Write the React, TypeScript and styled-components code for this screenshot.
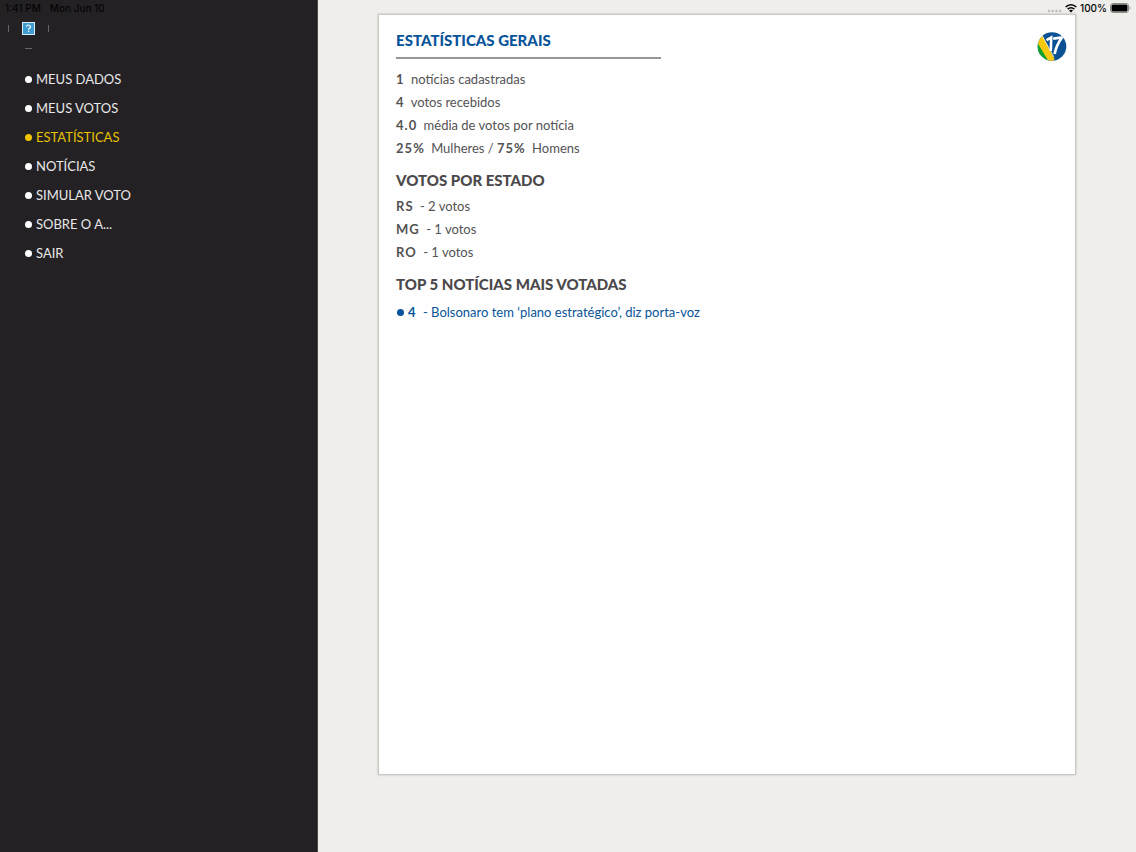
import React from "react";
import styled, { createGlobalStyle } from "styled-components";

const GlobalStyle = createGlobalStyle`
  *, *::before, *::after { box-sizing: border-box; }
  body {
    margin: 0;
    background: #efeeea;
    font-family: Lato, "Liberation Sans", sans-serif;
    font-size: 13px;
    color: #545354;
  }
`;

const Page = styled.div`
  position: relative;
  display: flex;
  min-height: 100vh;
`;

const StatusBar = styled.header`
  position: absolute;
  top: 0;
  left: 0;
  right: 0;
  display: flex;
  justify-content: space-between;
  padding: 0 5px;
  font-family: Inter, "Liberation Sans", sans-serif;
  font-size: 10px;
  font-weight: 500;
  line-height: 16px;
  color: #050505;
`;

const StatusGroup = styled.div<{ $gap: number }>`
  display: flex;
  align-items: center;
  gap: ${({ $gap }) => $gap}px;
`;

const Sidebar = styled.aside`
  flex: 0 0 28%;
  padding: 8px 8px 0;
  background: #242124;
  border-right: 1px solid #4b494b;
`;

const Avatar = styled.svg`
  display: block;
`;

const Menu = styled.ul`
  list-style: none;
  margin: 16px 0 0;
  padding: 0 0 0 17px;
`;

const MenuLink = styled.a<{ $active: boolean }>`
  display: flex;
  align-items: center;
  gap: 4px;
  line-height: 29px;
  text-decoration: none;
  color: ${({ $active }) => ($active ? "#e6c200" : "#e8e8e8")};

  &::before {
    content: "";
    width: 7px;
    height: 7px;
    border-radius: 50%;
    background: ${({ $active }) => ($active ? "#f0c400" : "#ffffff")};
  }
`;

const Main = styled.main`
  flex: 1;
  display: flex;
  padding: 14px 60px 77px;
`;

const Card = styled.article`
  flex: 1;
  display: flex;
  justify-content: space-between;
  align-items: flex-start;
  padding: 17px 8px 16px 17px;
  background: #fefefe;
  border: 1px solid #c9c8c4;
  box-shadow: 0 0 2px #bdbcb8;
`;

const Title = styled.h1`
  width: 265px;
  margin: 0 0 9px;
  padding-bottom: 9px;
  border-bottom: 2px solid #969696;
  font-size: 15px;
  font-weight: 900;
  line-height: 16px;
  color: #07549a;
`;

const Subtitle = styled.h2`
  margin: 9px 0 3px;
  font-size: 15px;
  font-weight: 900;
  line-height: 23px;
  color: #4b494b;
`;

const Lines = styled.ul`
  list-style: none;
  margin: 0;
  padding: 0;
  line-height: 23px;
`;

const Value = styled.b`
  margin-right: 3px;
  letter-spacing: 1px;
`;

const NewsLink = styled.a`
  display: flex;
  align-items: center;
  white-space: pre;
  line-height: 26px;
  text-decoration: none;
  color: #07549a;

  &::before {
    content: "";
    width: 7px;
    height: 7px;
    margin: 0 4px 0 1px;
    border-radius: 50%;
    background: #07549a;
  }
`;

const Badge = styled.svg`
  flex: none;
`;

const menu = [
  "MEUS DADOS",
  "MEUS VOTOS",
  "ESTATÍSTICAS",
  "NOTÍCIAS",
  "SIMULAR VOTO",
  "SOBRE O A...",
  "SAIR",
];

const states = [
  { name: "RS", votes: 2 },
  { name: "MG", votes: 1 },
  { name: "RO", votes: 1 },
];

function AvatarPlaceholder() {
  return (
    <Avatar width="41" height="41" viewBox="0 0 41 41" aria-label="Foto do perfil" role="img">
      <path d="M.5 17v7M40.5 17v7M17 40.5h7" stroke="#666466" fill="none" />
      <rect x="14.5" y="14.5" width="12" height="12" fill="#3f9bd0" stroke="#d9edf7" />
      <path d="M18.5 18.7c.2-2.3 4-2.3 4 .2 0 1.4-2 1.4-2 2.8" stroke="#fff" strokeWidth="1.2" fill="none" />
      <rect x="19.9" y="22.8" width="1.3" height="1.3" fill="#fff" />
    </Avatar>
  );
}

function Logo() {
  return (
    <Badge width="30" height="30" viewBox="0 0 30 30" role="img" aria-label="17">
      <defs>
        <clipPath id="disc">
          <circle cx="15" cy="14.5" r="14.3" />
        </clipPath>
      </defs>
      <g clipPath="url(#disc)">
        <rect width="30" height="30" fill="#0a5293" />
        <path d="M0 7L13 30H0z" fill="#12a32b" />
        <path d="M1 2L6 4.5L17.5 27L16 30H12L0 10z" fill="#f8c90f" />
        <path d="M5 3.5L17 25" stroke="#fff" strokeWidth=".7" />
        <path d="M9.5 8.2L14.2 5.6L13.8 19" stroke="#fff" strokeWidth="2.6" fill="none" />
        <path d="M16.2 6.7L25 5.5C21.4 10.3 18.9 15.5 17.6 22" stroke="#fff" strokeWidth="2.7" fill="none" />
      </g>
    </Badge>
  );
}

export default function App() {
  return (
    <>
      <GlobalStyle />
      <Page>
        <Sidebar>
          <AvatarPlaceholder />
          <nav>
            <Menu>
              {menu.map((label) => (
                <li key={label}>
                  <MenuLink href="#" $active={label === "ESTATÍSTICAS"}>
                    {label}
                  </MenuLink>
                </li>
              ))}
            </Menu>
          </nav>
        </Sidebar>
        <Main>
          <Card>
            <section>
              <Title>ESTATÍSTICAS GERAIS</Title>
              <Lines>
                <li><Value>1</Value> notícias cadastradas</li>
                <li><Value>4</Value> votos recebidos</li>
                <li><Value>4.0</Value> média de votos por notícia</li>
                <li><Value>25%</Value> Mulheres / <Value>75%</Value> Homens</li>
              </Lines>
              <Subtitle>VOTOS POR ESTADO</Subtitle>
              <Lines>
                {states.map((s) => (
                  <li key={s.name}>
                    <Value>{s.name}</Value> - {s.votes} votos
                  </li>
                ))}
              </Lines>
              <Subtitle>TOP 5 NOTÍCIAS MAIS VOTADAS</Subtitle>
              <NewsLink href="#">
                <Value>4</Value> - Bolsonaro tem ‘plano estratégico’, diz porta-voz
              </NewsLink>
            </section>
            <Logo />
          </Card>
        </Main>
        <StatusBar>
          <StatusGroup $gap={9}>
            <span>1:41 PM</span>
            <span>Mon Jun 10</span>
          </StatusGroup>
          <StatusGroup $gap={3}>
            <svg width="15" height="16" viewBox="0 0 15 16" fill="#bdbcb9">
              <circle cx="2" cy="11" r="1.2" />
              <circle cx="5.7" cy="11" r="1.2" />
              <circle cx="9.4" cy="11" r="1.2" />
              <circle cx="13.1" cy="11" r="1.2" />
            </svg>
            <svg width="12" height="10" viewBox="0 0 12 10" fill="none" stroke="#050505" strokeWidth="1.7">
              <path d="M.7 4C3.7 1 8.3 1 11.3 4M2.7 6.2c1.9-1.8 4.7-1.8 6.6 0" />
              <path d="M6 9.6L4 7.6c1.1-1 2.9-1 4 0z" fill="#050505" stroke="none" />
            </svg>
            <span>100%</span>
            <svg width="21" height="10" viewBox="0 0 21 10">
              <rect x=".5" y=".5" width="18" height="9" rx="2.5" fill="none" stroke="#8b8a88" />
              <rect x="1.5" y="1.5" width="16" height="7" rx="1.5" fill="#000" />
              <path d="M19.5 3.5c1.3.4 1.3 2.6 0 3z" fill="#8b8a88" />
            </svg>
          </StatusGroup>
        </StatusBar>
      </Page>
    </>
  );
}
